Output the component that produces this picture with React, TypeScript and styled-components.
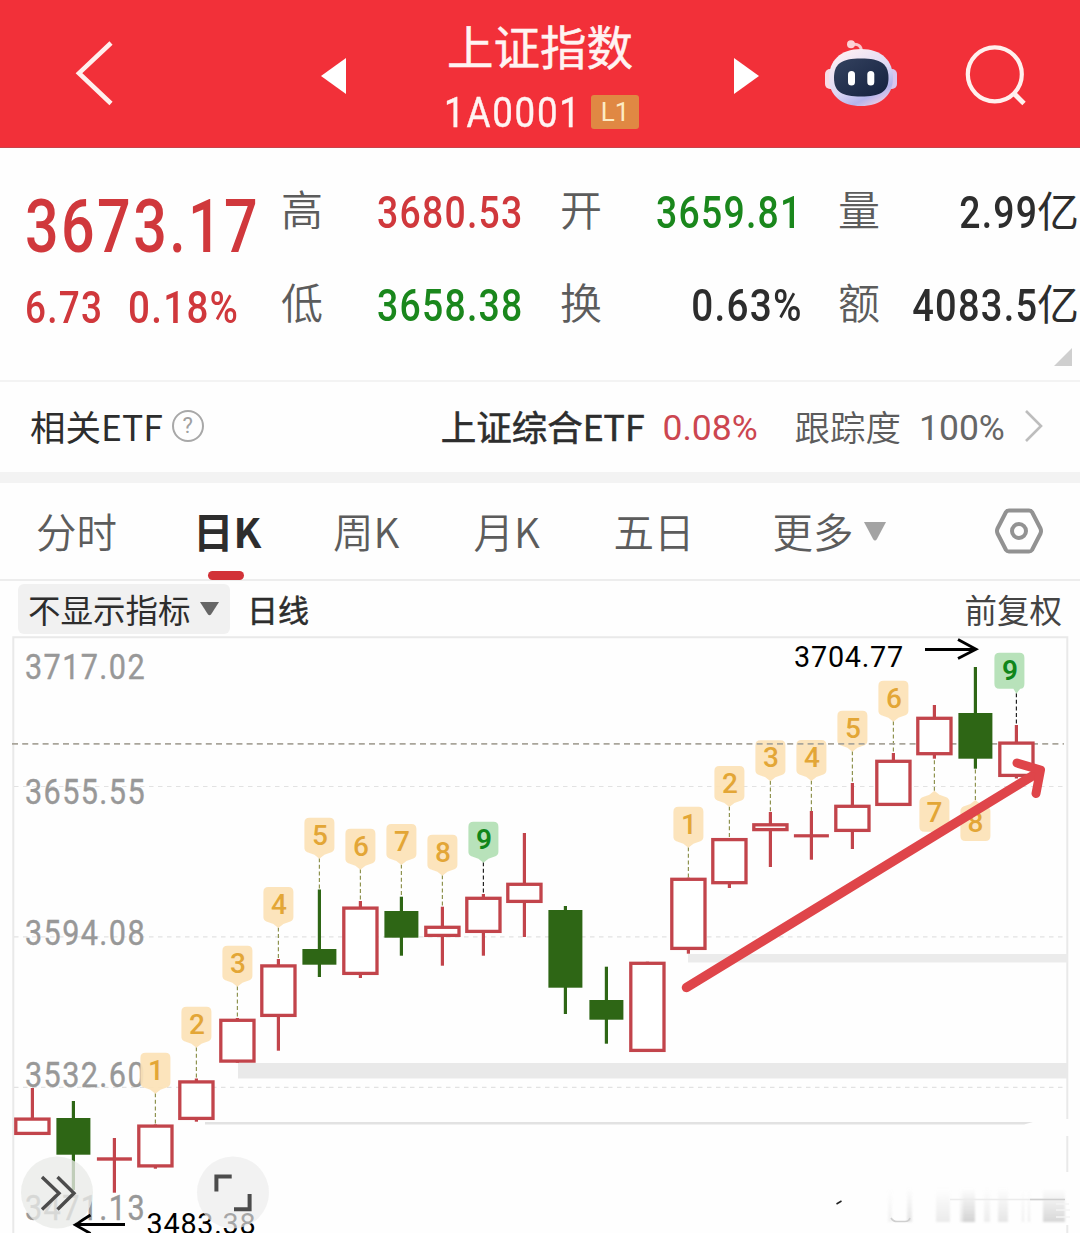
import React from "react";
import styled, { createGlobalStyle } from "styled-components";

const CJK = `"Noto Sans CJK SC", "Noto Sans", sans-serif`;
const DIGITS = `Roboto, "Noto Sans CJK SC", sans-serif`;

const RED = "#d0383c";
const GREEN = "#1a871c";
const INK = "#2d2d2d";

const Global = createGlobalStyle`
  * { box-sizing: border-box; }
  body { margin: 0; background: #fefefe; font-family: ${CJK}; color: ${INK}; }
`;

const Page = styled.main`
  width: 1080px;
  height: 1233px;
  overflow: hidden;
  display: flex;
  flex-direction: column;
  background: #fefefe;
`;

/* ---------- header ---------- */

const Header = styled.header`
  display: grid;
  grid-template-columns: 321px 438px 321px;
  height: 148px;
  flex: none;
  background: #f23039;
  border-bottom: 1px solid #c9434a;
  color: #fff3f2;
`;

const HeaderLeft = styled.div`
  padding: 40px 0 0 74px;
`;

const Switcher = styled.div`
  display: flex;
  justify-content: space-between;
  align-items: flex-start;
`;

const StepIcon = styled.svg`
  margin-top: 57px;
  fill: #fff;
`;

const Titles = styled.div`
  display: flex;
  flex-direction: column;
  align-items: center;
  padding-top: 15px;
`;

const Title = styled.h1`
  margin: 0;
  height: 66px;
  font: 400 46.5px/60px ${CJK};
  -webkit-text-stroke: 0.5px #fff3f2;
`;

const CodeRow = styled.div`
  display: flex;
  align-items: center;
  gap: 13px;
  height: 62px;
  padding-left: 3px;
`;

const Code = styled.span`
  width: 134px;
  padding-top: 2px;
  font: 400 42px/62px ${DIGITS};
  letter-spacing: 2px;
  -webkit-text-stroke: 0.4px #fff3f2;
  transform: scaleX(0.875);
  transform-origin: left center;
  white-space: nowrap;
`;

const Level = styled.span`
  width: 48px;
  height: 34px;
  border-radius: 3px;
  background: #e08843;
  color: #fdebc4;
  text-align: center;
  font: 400 26px/34px ${DIGITS};
`;

const HeaderRight = styled.div`
  display: flex;
  gap: 66px;
  padding: 38px 0 0 65px;
`;

/* ---------- quote ---------- */

const Quote = styled.section`
  display: grid;
  grid-template-columns: 256px 279px 278px 242px;
  grid-template-rows: 93px 93px 46px;
  height: 234px;
  flex: none;
  padding: 18px 0 0 25px;
  border-bottom: 2px solid #f3f3f3;
`;

const Last = styled.div`
  grid-row: 1 / span 2;
  display: flex;
  flex-direction: column;
  padding-top: 21px;
`;

const Digits = styled.span<{ $size: number; $scale: number; $color: string; $from?: string; $gap?: number }>`
  font: 500 ${(p) => p.$size}px/80px ${DIGITS};
  letter-spacing: ${(p) => p.$gap ?? 1.5}px;
  margin-right: ${(p) => (p.$from === "right" ? -1.5 : 0)}px;
  color: ${(p) => p.$color};
  white-space: nowrap;
  transform: scaleX(${(p) => p.$scale});
  transform-origin: ${(p) => p.$from ?? "left"} center;
`;

const ChangeRow = styled.div`
  display: grid;
  grid-template-columns: 103px 1fr;
  padding-top: 1px;
`;

const Stat = styled.div`
  display: flex;
  align-items: center;
  width: 241px;
`;

const StatLabel = styled.span`
  width: 42px;
  padding-bottom: 9px;
  font: 350 42px/60px ${CJK};
  color: #5c5c5c;
`;

const StatValue = styled.span`
  flex: 1;
  min-width: 0;
  display: flex;
  justify-content: flex-end;
  align-items: center;
`;

const Unit = styled.span`
  padding-bottom: 8px;
  font: 400 42px/60px ${CJK};
`;

const Corner = styled.svg`
  grid-column: 4;
  grid-row: 3;
  justify-self: end;
  margin: -4px 8px 0 0;
  fill: #cfcfcf;
`;

/* ---------- ETF ---------- */

const EtfRow = styled.section`
  display: flex;
  align-items: center;
  justify-content: space-between;
  height: 101px;
  flex: none;
  padding: 0 37px 3px 30px;
  border-bottom: 11px solid #f3f3f3;
`;

const Group = styled.div<{ $gap: number }>`
  display: flex;
  align-items: center;
  gap: ${(p) => p.$gap}px;
`;

const EtfText = styled.span<{ $weight?: number; $stroke?: number; $color?: string }>`
  font: ${(p) => p.$weight ?? 400} 35.5px/50px ${CJK};
  color: ${(p) => p.$color ?? INK};
  -webkit-text-stroke: ${(p) => p.$stroke ?? 0}px currentColor;
  white-space: nowrap;
`;

const EtfNumber = styled.span<{ $color: string; $width: number }>`
  width: ${(p) => p.$width}px;
  padding-top: 5px;
  font: 400 35.5px/50px ${DIGITS};
  color: ${(p) => p.$color};
  white-space: nowrap;
`;

const Help = styled.span`
  width: 32px;
  height: 32px;
  margin-top: 1px;
  border: 2px solid #a8a8a8;
  border-radius: 50%;
  text-align: center;
  font: 400 22px/28px ${DIGITS};
  color: #a0a0a0;
`;

/* ---------- tabs ---------- */

const Tabs = styled.nav`
  display: grid;
  grid-template-columns: 160px 137px 140.5px 140px 159px 221px 50px;
  height: 98px;
  flex: none;
  padding-left: 36px;
  border-bottom: 2px solid #ededed;
`;

const Tab = styled.div<{ $active?: boolean }>`
  display: flex;
  gap: 10px;
  align-items: center;
  position: relative;
  font: ${(p) => (p.$active ? 700 : 350)} 40.5px/60px ${CJK};
  color: ${(p) => (p.$active ? INK : "#5c5c5c")};
  white-space: nowrap;
  ${(p) => p.$active && "margin-left: -3px;"}
`;

const Underline = styled.i`
  position: absolute;
  left: 15px;
  bottom: -1px;
  width: 36px;
  height: 9px;
  border-radius: 5px;
  background: #d23238;
`;

/* ---------- indicator bar ---------- */

const Bar = styled.div`
  display: flex;
  align-items: center;
  height: 55px;
  flex: none;
  padding: 0 18px 0;
`;

const Picker = styled.div`
  display: flex;
  align-items: center;
  gap: 9px;
  width: 212px;
  height: 50px;
  padding: 0 0 0 10px;
  border-radius: 6px;
  background: #f1f1f1;
`;

const BarText = styled.span<{ $size?: number; $stroke?: number; $push?: boolean; $color?: string }>`
  font: 400 ${(p) => p.$size ?? 32.5}px/46px ${CJK};
  color: ${(p) => p.$color ?? INK};
  -webkit-text-stroke: ${(p) => p.$stroke ?? 0}px currentColor;
  white-space: nowrap;
  margin-left: ${(p) => (p.$push ? "auto" : "0")};
`;

const Period = styled(BarText)`
  margin-left: 17px;
`;

/* ---------- chart ---------- */

const ChartSvg = styled.svg`
  display: block;
  flex: none;
`;

const STEP = 41;
const cx = (i: number) => 32.4 + STEP * i;

type Candle = { up: boolean; top: number; bottom: number; high: number; low: number };
const c = (up: boolean, top: number, bottom: number, high: number, low: number): Candle => ({ up, top, bottom, high, low });

const candles: Candle[] = [
  c(true, 1117.5, 1135, 1088, 1135),
  c(false, 1118, 1154.7, 1101, 1190),
  c(true, 1157.3, 1160.7, 1138, 1192.7),
  c(true, 1124.5, 1167.5, 1124.5, 1168.7),
  c(true, 1080.3, 1120, 1078.5, 1121.7),
  c(true, 1018.7, 1062.7, 1018, 1062.7),
  c(true, 964.3, 1017, 959, 1050.7),
  c(false, 949, 964.7, 889.5, 977),
  c(true, 906.5, 975, 901, 978),
  c(false, 911, 937.7, 896.7, 955.7),
  c(true, 925.7, 937, 906.7, 965.7),
  c(true, 896.7, 933, 894, 955.7),
  c(true, 882.7, 903, 833, 937),
  c(false, 910, 987.7, 906, 1014),
  c(false, 1000, 1019.7, 966.7, 1043.7),
  c(true, 961.7, 1052, 961.7, 1052),
  c(true, 877.7, 950, 877.7, 953.7),
  c(true, 838, 884.3, 838, 888),
  c(true, 823.2, 831.2, 812, 867),
  c(true, 834.2, 837.4, 811, 859.7),
  c(true, 804.7, 832, 783, 849),
  c(true, 759.7, 806, 753, 806),
  c(true, 716.7, 755.3, 705, 758.7),
  c(false, 713, 758.7, 667, 768.7),
  c(true, 741.5, 777, 725, 778.5),
];

type Mark = { i: number; n: number; top: number; flip?: boolean; green?: boolean; dx?: number };
const marks: Mark[] = [
  { i: 3, n: 1, top: 1052.7 },
  { i: 4, n: 2, top: 1006.7 },
  { i: 5, n: 3, top: 945.7 },
  { i: 6, n: 4, top: 887 },
  { i: 7, n: 5, top: 817.7 },
  { i: 8, n: 6, top: 828.7 },
  { i: 9, n: 7, top: 824 },
  { i: 10, n: 8, top: 834.7 },
  { i: 11, n: 9, top: 821.7, green: true },
  { i: 16, n: 1, top: 806.7 },
  { i: 17, n: 2, top: 766 },
  { i: 18, n: 3, top: 740.3 },
  { i: 19, n: 4, top: 740 },
  { i: 20, n: 5, top: 710.7 },
  { i: 21, n: 6, top: 680.7 },
  { i: 22, n: 7, top: 790.7, flip: true },
  { i: 23, n: 8, top: 800, flip: true },
  { i: 24, n: 9, top: 652.7, green: true, dx: -7 },
];

function MarkBadge({ m }: { m: Mark }) {
  const x = cx(m.i);
  const dx = m.dx ?? 0;
  const fill = m.green ? "#b2e0b4" : "#fce2b6";
  const ink = m.green ? "#10861a" : "#e3a636";
  const candle = candles[m.i];
  const tipY = m.flip ? m.top : m.top + 40.5;
  const body = dx
    ? "M-10 0H10Q15 0 15 5V31Q15 36 11 36L10 37L7 41L4 36H-10Q-15 36 -15 31V5Q-15 0 -10 0Z"
    : "M-10 0H10Q15 0 15 5V30Q15 33 12 34.500L5 37L0 41L-5 37L-12 34.500Q-15 33 -15 30V5Q-15 0 -10 0Z";
  const at = m.flip
    ? `translate(${x} ${m.top + 41}) scale(1 -1)`
    : `translate(${x + dx} ${m.top})`;
  return (
    <g>
      <line
        x1={x} x2={x}
        y1={tipY} y2={m.flip ? candle.low : candle.high}
        stroke={m.green ? "#222" : "#8f9350"} strokeWidth="1.2" strokeDasharray="4 2.6"
      />
      <path d={body} transform={at} fill={fill} fillOpacity="0.92" />
      <text
        x={x + dx + (m.flip ? 0 : 0.5)} y={m.top + (m.flip ? 31.7 : 27)}
        textAnchor="middle" fontFamily="Roboto, sans-serif" fontSize="28" fontWeight={m.green ? 600 : 500} fill={ink}
      >
        {m.n}
      </text>
    </g>
  );
}

function CandleShape({ d, x }: { d: Candle; x: number }) {
  const color = d.up ? "#c2444b" : "#2e6615";
  const doji = d.bottom - d.top < 4;
  return (
    <g>
      <line x1={x} x2={x} y1={d.high} y2={d.top + 1} stroke={color} strokeWidth="3.2" />
      <line x1={x} x2={x} y1={d.bottom - 1} y2={d.low} stroke={color} strokeWidth="3.2" />
      {d.up && !doji && (
        <rect x={x - 16.6} y={d.top + 1.6} width="33.2" height={d.bottom - d.top - 3.2} fill="#fff" stroke={color} strokeWidth="3.3" />
      )}
      {doji && <rect x={x - 17.5} y={d.top} width="35" height={d.bottom - d.top} fill={color} />}
      {!d.up && <rect x={x - 17} y={d.top} width="34" height={d.bottom - d.top} fill={color} />}
    </g>
  );
}

const axis: [string, number][] = [
  ["3717.02", 679],
  ["3655.55", 804],
  ["3594.08", 945],
  ["3532.60", 1087],
  ["3471.13", 1220],
];

/* Ghosted columns in the lower right: x, width, opacity */
const ghosts: [number, number, number][] = [
  [888, 4, 0.25],
  [907, 5, 0.5],
  [936, 14, 0.4],
  [960, 3, 0.45],
  [963, 12, 0.9],
  [984, 6, 0.35],
  [998, 10, 0.5],
  [1022, 2, 0.35],
  [1028, 2, 0.35],
  [1043, 22, 0.8],
];

function Chart() {
  return (
    <ChartSvg width="1080" height="597" viewBox="0 636 1080 597">
      <defs>
        <linearGradient id="ghost" x1="0" y1="0" x2="0" y2="1">
          <stop offset="0" stopColor="#d0d0d0" stopOpacity="0" />
          <stop offset="1" stopColor="#cdcdcd" />
        </linearGradient>
        <filter id="soften" x="-10%" y="-10%" width="120%" height="120%">
          <feGaussianBlur stdDeviation="1.3" />
        </filter>
      </defs>

      <g stroke="#e9e9e9" strokeWidth="2" fill="none">
        <path d="M13.3 1233V637.3H1067.3V1119M1067.3 1136V1172M1067.3 1225V1233" />
      </g>
      <g stroke="#e2e2e2" strokeWidth="1.2" strokeDasharray="4.5 4.5">
        <path d="M14 786.5H1066M14 936.8H1066M14 1087.3H1066" />
      </g>
      <rect x="688" y="954" width="380" height="8.5" fill="#ebebeb" />
      <rect x="238" y="1063" width="830" height="15.5" fill="#e9e9e9" />
      <path d="M205 1122H1033L1024 1124.5H205Z" fill="#e2e2e2" />

      <g fontFamily="Roboto, sans-serif" fontSize="35" letterSpacing="1.6" fill="#989898" stroke="#989898" strokeWidth="0.4">
        {axis.map(([t, y]) => (
          <text key={t} x="25" y={y} textLength="121" lengthAdjust="spacingAndGlyphs">{t}</text>
        ))}
      </g>

      {marks.map((m) => <MarkBadge key={m.i} m={m} />)}
      <path d="M12 743.8H1064" stroke="#a9a59b" strokeWidth="1.7" strokeDasharray="6 4.2" />
      {candles.map((d, i) => <CandleShape key={i} d={d} x={cx(i)} />)}

      <g fill="none" stroke="#000" strokeWidth="2.8">
        <path d="M925 649.5H975M958 639.5L976 649.3L958 658.5" />
        <path d="M125 1224.5H76M90.5 1215L75 1224.8L90.5 1233.5" />
      </g>
      <g fontFamily="Roboto, sans-serif" fontSize="30" letterSpacing="0.8" fill="#000">
        <text x="794" y="667" textLength="110" lengthAdjust="spacingAndGlyphs">3704.77</text>
        <text x="146.5" y="1233.5" textLength="110" lengthAdjust="spacingAndGlyphs">3483.38</text>
      </g>

      <g fill="none" stroke="#df454a" strokeWidth="9.5" strokeLinecap="round" strokeLinejoin="round">
        <path d="M686.5 987.5L1038 772.500" />
        <path d="M1017 763L1040.500 770L1036 793.500" strokeWidth="9" />
      </g>

      <circle cx="57" cy="1192.5" r="36" fill="#e9eae8" fillOpacity="0.78" />
      <circle cx="233" cy="1192.5" r="36" fill="#ececec" fillOpacity="0.7" />
      <g fill="none" stroke="#4c4c4c" strokeWidth="3.4">
        <path d="M42 1177L59 1193.3L42 1209.5M57.5 1177L74 1193.3L57.5 1209.5" />
        <path d="M231.7 1176.4H216.4V1191.5M234 1209.3H249.6V1194" strokeWidth="4" />
      </g>

      <path d="M836.5 1204L841.5 1201" stroke="#222" strokeWidth="1.5" />
      <g filter="url(#soften)">
        {ghosts.map(([x, w, o]) => (
          <rect key={x} x={x} y="1188" width={w} height="34" fill="url(#ghost)" opacity={o} />
        ))}
      </g>
      <path d="M891 1218Q893 1221.5 897 1221.5H905Q909 1221.5 910 1218" fill="none" stroke="#cfcfcf" strokeWidth="1.6" />
      <path d="M950 1199.5H1064" stroke="#ececec" strokeWidth="1.5" />
      <path d="M1030 1199.5H1065" stroke="#cecece" strokeWidth="1.5" />
      <path d="M1056 1204H1069M1056 1210H1070M1056 1217H1070" stroke="#f4f4f4" strokeWidth="1.5" />
    </ChartSvg>
  );
}

function Robot() {
  return (
    <svg width="74" height="70" viewBox="824 38 74 70">
      <defs>
        <linearGradient id="shell" x1="0.2" y1="0" x2="0.8" y2="1">
          <stop offset="0" stopColor="#fff0f2" />
          <stop offset="0.55" stopColor="#dcd8f4" />
          <stop offset="0.8" stopColor="#b4b4ec" />
          <stop offset="1" stopColor="#f6d0e2" />
        </linearGradient>
        <linearGradient id="visor" x1="0" y1="0" x2="1" y2="1">
          <stop offset="0" stopColor="#34425f" />
          <stop offset="1" stopColor="#14213f" />
        </linearGradient>
      </defs>
      <path d="M852 44.500Q861.500 43 861.500 52" fill="none" stroke="#fbc6cb" strokeWidth="3" />
      <circle cx="851" cy="44.200" r="4" fill="#fcd2d6" />
      <rect x="825" y="69" width="11" height="20" rx="5" fill="#f8dce6" />
      <rect x="886" y="69" width="11" height="20" rx="5" fill="#d9c6ee" />
      <path d="M861 49C882 49 893 61 893 78C893 96 880 106 861 106C842 106 829 96 829 78C829 61 840 49 861 49Z" fill="url(#shell)" />
      <path d="M861 58.5C881 58.5 888.500 64 888.500 78C888.500 92 880 96.500 861 96.500C842 96.500 834 92 834 78C834 64 841 58.500 861 58.500Z" fill="url(#visor)" />
      <rect x="848" y="71" width="7" height="14.500" rx="3.500" fill="#fff" />
      <rect x="867.300" y="71" width="7" height="14.500" rx="3.500" fill="#fff" />
    </svg>
  );
}

type StatProps = { label: string; value: string; unit?: string; color: string; scale?: number };

function StatItem({ label, value, unit, color, scale = 0.83 }: StatProps) {
  return (
    <Stat>
      <StatLabel>{label}</StatLabel>
      <StatValue>
        <Digits $size={45} $scale={scale} $color={color} $from="right">{value}</Digits>
        {unit && <Unit>{unit}</Unit>}
      </StatValue>
    </Stat>
  );
}

export default function App() {
  return (
    <>
      <Global />
      <Page>
        <Header>
          <HeaderLeft>
            <svg width="42" height="66" viewBox="74 40 42 66" fill="none" stroke="#fff0ee" strokeWidth="4.6">
              <path d="M111 43L79 73.200L111 103.500" />
            </svg>
          </HeaderLeft>
          <Switcher>
            <StepIcon width="25" height="38" viewBox="0 0 25 38"><path d="M25 1V37L0 19Z" /></StepIcon>
            <Titles>
              <Title>上证指数</Title>
              <CodeRow>
                <Code>1A0001</Code>
                <Level>L1</Level>
              </CodeRow>
            </Titles>
            <StepIcon width="25" height="38" viewBox="0 0 25 38"><path d="M0 1V37L25 19Z" /></StepIcon>
          </Switcher>
          <HeaderRight>
            <Robot />
            <svg width="64" height="70" viewBox="964 38 64 70" fill="none" stroke="#fff0ee" strokeWidth="4.200">
              <circle cx="994.800" cy="74.300" r="27" />
              <path d="M1013.500 93L1024 103.500" strokeWidth="4.800" />
            </svg>
          </HeaderRight>
        </Header>

        <Quote>
          <Last>
            <Digits $size={74} $scale={0.8} $gap={3} $color={RED}>3673.17</Digits>
            <ChangeRow>
              <Digits $size={45} $scale={0.82} $color={RED}>6.73</Digits>
              <Digits $size={45} $scale={0.857} $color={RED}>0.18%</Digits>
            </ChangeRow>
          </Last>
          <StatItem label="高" value="3680.53" color={RED} />
          <StatItem label="开" value="3659.81" color={GREEN} />
          <StatItem label="量" value="2.99" unit="亿" color={INK} />
          <StatItem label="低" value="3658.38" color={GREEN} />
          <StatItem label="换" value="0.63%" color={INK} scale={0.86} />
          <StatItem label="额" value="4083.5" unit="亿" color={INK} scale={0.845} />
          <Corner width="18" height="18" viewBox="0 0 18 18"><path d="M18 0V18H0Z" /></Corner>
        </Quote>

        <EtfRow>
          <Group $gap={9}>
            <EtfText>相关ETF</EtfText>
            <Help>?</Help>
          </Group>
          <Group $gap={18}>
            <EtfText $stroke={0.6}>上证综合ETF</EtfText>
            <EtfNumber $color="#cc4650" $width={114}>0.08%</EtfNumber>
            <EtfText $weight={350} $color="#5c5c5c">跟踪度</EtfText>
            <EtfNumber $color="#666" $width={86}>100%</EtfNumber>
            <svg width="20" height="34" viewBox="0 0 20 34" fill="none" stroke="#bdbdbd" strokeWidth="2.600">
              <path d="M3 2L18 17L3 32" />
            </svg>
          </Group>
        </EtfRow>

        <Tabs>
          <Tab>分时</Tab>
          <Tab $active>日K<Underline /></Tab>
          <Tab>周K</Tab>
          <Tab>月K</Tab>
          <Tab>五日</Tab>
          <Tab>
            更多
            <svg width="22" height="19" viewBox="0 0 22 19"><path d="M0 0H22L13 17Q11 20 9 17Z" fill="#a3a3a3" /></svg>
          </Tab>
          <Tab>
            <svg width="50" height="50" viewBox="995 506 50 50" fill="none" stroke="#929292" strokeLinejoin="round">
              <path d="M1010 510.500H1030Q1032 510.500 1033 512L1041.500 528.500Q1042.500 531 1041.500 533.500L1033 550Q1032 551.500 1030 551.500H1010Q1008 551.500 1007 550L998.500 533.500Q997.500 531 998.500 528.500L1007 512Q1008 510.500 1010 510.500Z" strokeWidth="4" />
              <circle cx="1020" cy="531" r="7" strokeWidth="4" />
            </svg>
          </Tab>
        </Tabs>

        <Bar>
          <Picker>
            <BarText>不显示指标</BarText>
            <svg width="19" height="14" viewBox="0 0 19 14"><path d="M0 0H19L11 12.500Q9.500 14 8 12.500Z" fill="#666" /></svg>
          </Picker>
          <Period $size={31} $stroke={0.5}>日线</Period>
          <BarText $push $color="#444">前复权</BarText>
        </Bar>

        <Chart />
      </Page>
    </>
  );
}
